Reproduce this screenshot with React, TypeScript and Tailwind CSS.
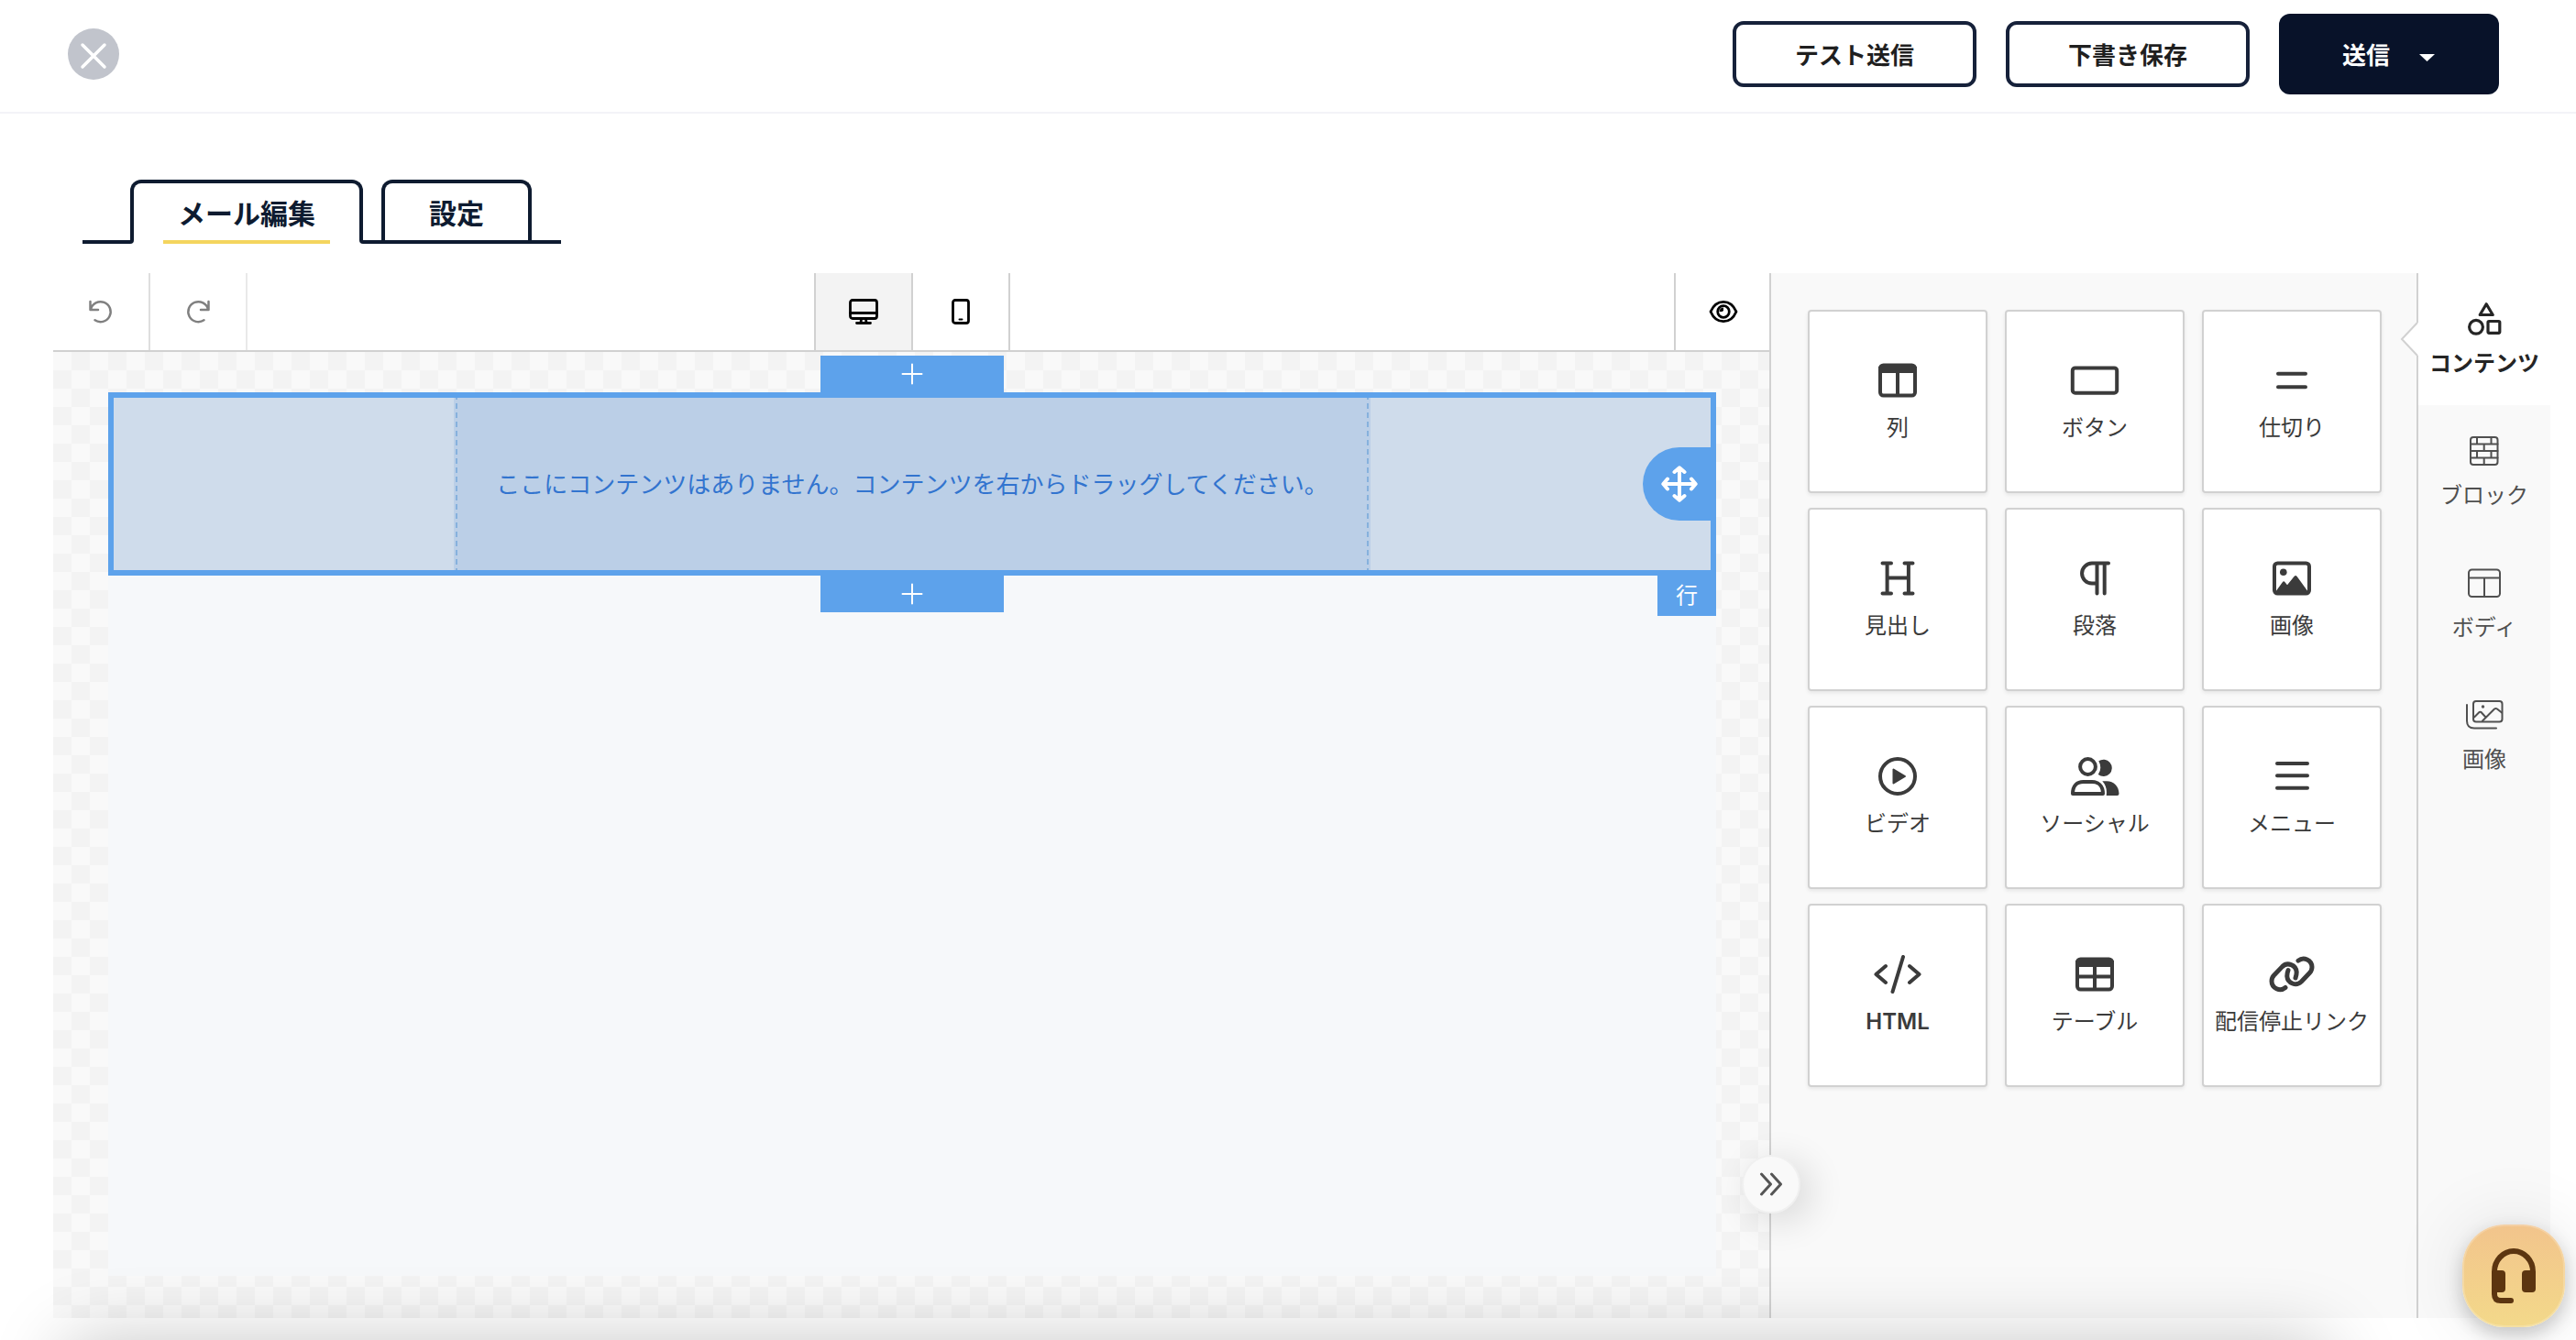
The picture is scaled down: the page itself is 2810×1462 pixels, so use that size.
import type { ReactNode } from "react";

type Item = { label: string; icon: ReactNode };

const stroke = {
  fill: "none",
  stroke: "currentColor",
  strokeWidth: 4,
  strokeLinecap: "round",
  strokeLinejoin: "round",
} as const;

function ToolIcon({ children }: { children: ReactNode }) {
  return (
    <svg width="54" height="42" viewBox="0 0 54 42" {...stroke}>
      {children}
    </svg>
  );
}

const tools: Item[] = [
  {
    label: "列",
    icon: (
      <ToolIcon>
        <rect x="8" y="4.5" width="38" height="33" rx="3.5" />
        <path d="M8 8H46V11H8zM27 12V37" strokeLinecap="butt" strokeLinejoin="miter" />
      </ToolIcon>
    ),
  },
  {
    label: "ボタン",
    icon: (
      <ToolIcon>
        <rect x="2.8" y="7.4" width="48.4" height="27.4" rx="3" />
      </ToolIcon>
    ),
  },
  {
    label: "仕切り",
    icon: (
      <ToolIcon>
        <path d="M12 13.8H42M12 28.2H42" />
      </ToolIcon>
    ),
  },
  {
    label: "見出し",
    icon: (
      <ToolIcon>
        <path d="M10.5 4.6H20M34.500 4.6H43.500M10.500 37.4H20M34.500 37.4H43.500M15.6 4.6V37.4M38.900 4.6V37.4M15.6 20.5H38.900" />
      </ToolIcon>
    ),
  },
  {
    label: "段落",
    icon: (
      <ToolIcon>
        <path d="M42 4.6H24A10.500 10.500 0 0 0 24 26.500H29M29.5 4.6V37.4M37.7 4.6V37.4" />
      </ToolIcon>
    ),
  },
  {
    label: "画像",
    icon: (
      <ToolIcon>
        <rect x="8" y="4.5" width="38" height="33" rx="3.5" />
        <circle cx="17.8" cy="14.3" r="3.8" fill="currentColor" stroke="none" />
        <path
          d="M9 36L16.8 25.2a1.8 1.8 0 0 1 2.8 0L22 28.2L29.7 18.8a1.8 1.8 0 0 1 2.8 0L45 36z"
          fill="currentColor"
          stroke="none"
        />
      </ToolIcon>
    ),
  },
  {
    label: "ビデオ",
    icon: (
      <ToolIcon>
        <circle cx="27" cy="21" r="19" />
        <path d="M22.5 13.5V28.5L35 21z" fill="currentColor" strokeWidth="2" />
      </ToolIcon>
    ),
  },
  {
    label: "ソーシャル",
    icon: (
      <ToolIcon>
        <circle cx="19.500" cy="10.5" r="8.4" />
        <path d="M3 40C3 31 8 27 14.500 27H24C30.500 27 36 31 36 40z" />
        <path
          d="M31.300 4.300A9.200 9.200 0 1 1 30.800 19Q35.500 12 31.300 4.300zM35.300 26.200H40C48 26.200 53.500 32 53.500 40Q53.500 42 51.500 42H39.700C40.500 36 39.500 30.500 35.300 26.200z"
          fill="currentColor"
          stroke="none"
        />
      </ToolIcon>
    ),
  },
  {
    label: "メニュー",
    icon: (
      <ToolIcon>
        <path d="M11 7H44M11 20.300H44M11 33.700H44" />
      </ToolIcon>
    ),
  },
  {
    label: "HTML",
    icon: (
      <ToolIcon>
        <path d="M33 2L21.500 40M14 12L3.500 21L14 30M40 12L50.500 21L40 30" />
      </ToolIcon>
    ),
  },
  {
    label: "テーブル",
    icon: (
      <ToolIcon>
        <rect x="8" y="4.5" width="38" height="33" rx="3.5" />
        <path d="M8 8H46V11H8zM27 12V37M8 23.500H46" strokeLinecap="butt" strokeLinejoin="miter" />
      </ToolIcon>
    ),
  },
  {
    label: "配信停止リンク",
    icon: (
      <ToolIcon>
        <path
          d="M20 35.500A9.200 9.200 0 0 1 5 28.500A9.200 9.200 0 0 1 7.600 22.100L16.600 12.600A9.200 9.200 0 0 1 32.200 18.500Q32.200 22 31 25M34 6.100A9.200 9.200 0 0 1 49 13.100A9.200 9.200 0 0 1 46.400 19.500L37.400 29A9.200 9.200 0 0 1 21.800 23.100Q21.800 19.600 23 16.600"
          strokeWidth="5"
        />
      </ToolIcon>
    ),
  },
];

const sideTabs: Item[] = [
  {
    label: "コンテンツ",
    icon: (
      <svg width="40" height="36" viewBox="0 0 40 36" {...stroke} strokeWidth="3.200">
        <path d="M22.200 1.800L29.200 13.500H15.200z" />
        <circle cx="11" cy="26.800" r="7.400" />
        <rect x="24" y="20.500" width="12.800" height="12.800" rx="1.200" />
      </svg>
    ),
  },
  {
    label: "ブロック",
    icon: (
      <svg width="40" height="36" viewBox="0 0 40 36" {...stroke} strokeWidth="2">
        <rect x="5" y="3" width="29.500" height="30" rx="3" />
        <path d="M5 10.500H34.500M5 18H34.500M5 25.500H34.500M12 3V10.500M27.500 3V10.500M19.700 10.500V18M12 18V25.500M27.500 18V25.500M19.700 25.500V33" />
      </svg>
    ),
  },
  {
    label: "ボディ",
    icon: (
      <svg width="40" height="36" viewBox="0 0 40 36" {...stroke} strokeWidth="2">
        <rect x="3" y="3.500" width="34" height="29.500" rx="3.500" />
        <path d="M3 12.500H37M20 12.500V33" />
      </svg>
    ),
  },
  {
    label: "画像",
    icon: (
      <svg width="42" height="36" viewBox="0 0 42 36" {...stroke} strokeWidth="2">
        <rect x="9" y="3" width="31.500" height="22.500" rx="3" />
        <path d="M2 7V24.500Q2 32.500 10 32.500H34M10 20.500L15.500 15Q16.500 14.500 17.500 15L22.500 20.500M19 24.500L32 11.500Q33.500 10.500 35 11.500L40 15.500" />
        <circle cx="19.500" cy="9" r="0.700" />
      </svg>
    ),
  },
];

function AddButton() {
  return (
    <button className="flex h-10 w-[200px] items-center justify-center bg-[#5da2eb] text-white">
      <svg width="24" height="24" viewBox="0 0 24 24" {...stroke} strokeWidth="2">
        <path d="M12 1.500V22.500M1.500 12H22.500" />
      </svg>
    </button>
  );
}

function Header() {
  return (
    <header className="flex h-[124px] items-center justify-between border-b-2 border-[#f3f3f8] pr-[84px] pb-1 pl-[74px]">
      <button className="flex size-14 items-center justify-center rounded-full bg-[#c1c4cc] pt-[3px] text-white">
        <svg width="30" height="30" viewBox="0 0 30 30" {...stroke} strokeWidth="3.500">
          <path d="M3 3L27 27M27 3L3 27" />
        </svg>
      </button>
      <div className="flex items-center gap-8 text-[26px] font-bold text-[#1f1f1f]">
        <button className="h-[72px] w-[266px] rounded-xl border-4 border-[#16213a] pb-0.5">テスト送信</button>
        <button className="h-[72px] w-[266px] rounded-xl border-4 border-[#16213a] pb-0.5">下書き保存</button>
        <button className="flex h-[88px] w-[240px] items-center rounded-xl bg-[#081229] pb-0.5 pl-[69px] text-white">
          送信
          <svg className="mt-2.5 ml-8" width="17" height="8" viewBox="0 0 17 8" fill="currentColor">
            <path d="M0 0H17L8.500 8z" />
          </svg>
        </button>
      </div>
    </header>
  );
}

function Tabs() {
  return (
    <nav className="mt-[72px] ml-[90px] flex h-[70px] items-end text-[30px] font-bold text-[#0e1b30]">
      <div className="h-1 w-14 rounded-br-sm bg-[#0e1b30]" />
      <button className="relative mb-1 -ml-1 h-[66px] w-[254px] rounded-t-xl border-4 border-b-0 border-[#0e1b30]">
        メール編集
        <span className="absolute -bottom-1 left-8 h-1 w-[182px] bg-[#f4d55e]" />
      </button>
      <div className="-ml-1 h-[70px] w-[220px] rounded-bl-sm border-b-4 border-[#0e1b30] pl-6">
        <button className="h-[66px] w-[164px] rounded-t-xl border-4 border-b-0 border-[#0e1b30]">設定</button>
      </div>
    </nav>
  );
}

function Toolbar() {
  return (
    <div className="flex h-[86px] border-b-2 border-[#d1d1d1]">
      <div className="flex w-[212px] text-[#808080]">
        <button className="flex w-[106px] items-center justify-center border-r-2 border-[#dedede]">
          <svg width="28" height="28" viewBox="0 0 28 28" {...stroke} strokeWidth="2.500">
            <path d="M2.500 3V12H11M3 11.500A11 11 0 1 1 7.500 23.300" />
          </svg>
        </button>
        <button className="flex w-[106px] items-center justify-center border-r-2 border-[#e9e9e9]">
          <svg width="28" height="28" viewBox="0 0 28 28" {...stroke} strokeWidth="2.500">
            <path d="M25.500 3V12H17M25 11.500A11 11 0 1 0 20.500 23.300" />
          </svg>
        </button>
      </div>
      <div className="ml-[618px] flex w-[214px] border-l-2 border-[#d1d1d1] text-black">
        <button className="flex w-[106px] items-center justify-center border-r-2 border-[#d1d1d1] bg-[#f3f3f3]">
          <svg width="32" height="28" viewBox="0 0 32 28" {...stroke} strokeWidth="2.800">
            <rect x="1.500" y="1.500" width="29" height="20" rx="2.500" />
            <path d="M1.500 15.500H30.500M13.500 22L13 26M18.500 22L19 26M8.500 26.500H23.500" />
          </svg>
        </button>
        <button className="flex w-[106px] items-center justify-center border-r-2 border-[#d1d1d1]">
          <svg width="20" height="28" viewBox="0 0 20 28" {...stroke} strokeWidth="2.800">
            <rect x="1.500" y="1.500" width="17" height="25" rx="2.500" />
            <path d="M8.500 22.500H11.500" strokeWidth="2" />
          </svg>
        </button>
      </div>
      <button className="ml-auto flex w-[104px] items-center justify-center border-l-2 border-[#d1d1d1] pl-0.5 text-black">
        <svg width="32" height="28" viewBox="0 0 32 28" {...stroke} strokeWidth="2.800">
          <path d="M2 14C5 7 10 3.300 16 3.300S27 7 30 14C27 21 22 24.700 16 24.700S5 21 2 14z" />
          <circle cx="16" cy="14" r="6.300" />
          <path d="M16 9.500V12.500Q15.500 14 14 14H11.500A4.500 4.500 0 0 1 16 9.500z" fill="currentColor" stroke="none" />
        </svg>
      </button>
    </div>
  );
}

function Canvas() {
  return (
    <div className="flex-1 bg-[#f9f9f9] bg-[conic-gradient(#f3f3f3_25%,#f9f9f9_0_50%,#f3f3f3_0_75%,#f9f9f9_0)] bg-[length:40px_40px] pt-11 pr-[58px] pl-[60px]">
      <div className="h-[964px] bg-[#f6f8fa]">
        <div className="relative flex h-[200px] justify-center bg-[#cfdceb]">
          <div className="flex w-[1000px] bg-[#bbcfe7] p-0.5">
            <div className="flex flex-1 items-center justify-center border-x-2 border-dashed border-[#86b1dd] pb-[3px] text-[26px] whitespace-nowrap text-[#3274cf]">
              ここにコンテンツはありません。コンテンツを右からドラッグしてください。
            </div>
          </div>
          <div className="absolute inset-0 border-[6px] border-[#5da2eb]" />
          <div className="absolute -top-10 left-[777px]">
            <AddButton />
          </div>
          <div className="absolute -bottom-10 left-[777px]">
            <AddButton />
          </div>
          <button className="absolute top-[60px] right-0 flex h-20 w-20 items-center rounded-l-full bg-[#5da2eb] pl-5 text-white">
            <svg width="40" height="40" viewBox="0 0 40 40" {...stroke}>
              <path d="M20 2.500V37.500M2.500 20H37.500M14.500 7L20 2.300L25.500 7M14.500 33L20 37.700L25.500 33M7 14.500L2.300 20L7 25.500M33 14.500L37.700 20L33 25.500" />
            </svg>
          </button>
          <span className="absolute right-0 -bottom-11 flex h-11 w-16 items-center justify-center bg-[#5da2eb] pb-1 text-2xl text-white">
            行
          </span>
        </div>
      </div>
    </div>
  );
}

function ToolPanel() {
  return (
    <section className="relative w-[706px] border-l-2 border-[#d1d1d1] bg-[#f9f9f9] pt-10 pl-10">
      <div className="grid grid-cols-[repeat(3,196px)] gap-x-[19px] gap-y-4">
        {tools.map((tool) => (
          <button
            key={tool.label}
            className="flex h-[200px] flex-col items-center rounded border-2 border-[#d1d1d1] bg-white pt-[54px] text-[#3b3b3b] shadow-[0_2px_4px_rgba(0,0,0,0.08)]"
          >
            {tool.icon}
            <span className="mt-[11px] text-2xl leading-9 whitespace-nowrap">
              {tool.label === "HTML" ? <span className="font-[Inter] font-semibold">HTML</span> : tool.label}
            </span>
          </button>
        ))}
      </div>
      <button className="absolute top-[962px] -left-8 flex size-16 items-center justify-center rounded-full border-2 border-[#f0f0f0] bg-[#f9f9f9] text-[#555] shadow-[10px_8px_40px_rgba(0,0,0,0.14)]">
        <svg width="26" height="26" viewBox="0 0 26 26" {...stroke} strokeWidth="3">
          <path d="M2.500 2L12.500 13L2.500 24M13.500 2L23.500 13L13.500 24" />
        </svg>
      </button>
    </section>
  );
}

function SideNav() {
  return (
    <aside className="relative w-[146px] border-l-2 border-[#d1d1d1] bg-[#f9f9f9] text-2xl">
      {sideTabs.map((tab, i) => (
        <button
          key={tab.label}
          className={`flex h-36 w-full flex-col items-center pt-8 ${
            i === 0 ? "bg-white font-bold text-[#252525]" : "text-[#505050]"
          }`}
        >
          {tab.icon}
          <span className="mt-[11px] leading-9">{tab.label}</span>
        </button>
      ))}
      <svg className="absolute top-[53px] -left-5" width="21" height="38" viewBox="0 0 21 38">
        <path d="M21 1H19L2 19L19 37H21z" fill="white" />
        <path d="M19 1L2 19L19 37" fill="none" stroke="#d1d1d1" strokeWidth="2" />
      </svg>
    </aside>
  );
}

export default function App() {
  return (
    <main className="relative h-[1462px] w-[2810px] overflow-hidden bg-white font-['Noto_Sans_CJK_JP',sans-serif]">
      <Header />
      <Tabs />
      <div className="mt-8 ml-[58px] flex h-[1140px] w-[2724px]">
        <div className="flex w-[1872px] flex-col">
          <Toolbar />
          <Canvas />
        </div>
        <ToolPanel />
        <SideNav />
      </div>

      {/* Bottom sheet shadow */}
      <div className="absolute top-full left-[70px] h-40 w-[2470px] rounded-3xl shadow-[0_0_80px_rgba(0,0,0,0.22)]" />

      {/* Support chat */}
      <button className="absolute right-3 bottom-3.5 flex size-28 items-center justify-center rounded-[46px] border-2 border-white/20 bg-linear-to-b from-[#f2c48c] to-[#f3d98a] bg-origin-border text-[#5c3510] shadow-[0_8px_20px_rgba(0,0,0,0.2),0_0_80px_rgba(0,0,0,0.1)]">
        <svg width="48" height="60" viewBox="0 0 48 60" fill="currentColor">
          <path d="M3 46V25.500A21 22.500 0 0 1 45 25.500V30M3 44V50Q3 57 10 57H21" fill="none" stroke="currentColor" strokeWidth="6" />
          <rect y="24" width="15" height="24" rx="4" />
          <rect x="33" y="24" width="15" height="24" rx="4" />
          <rect x="8" y="54" width="16" height="6" rx="3" />
        </svg>
      </button>
    </main>
  );
}
